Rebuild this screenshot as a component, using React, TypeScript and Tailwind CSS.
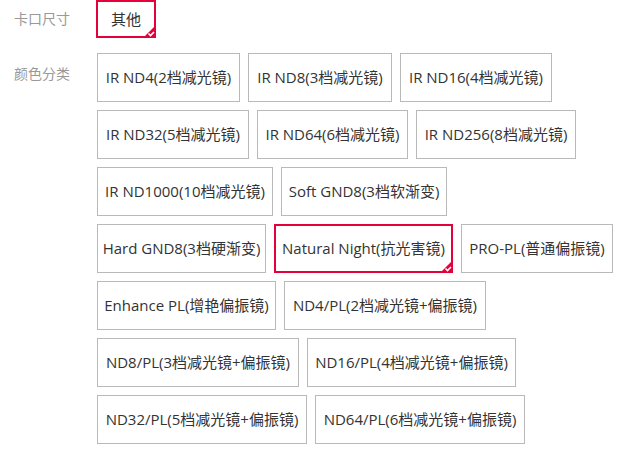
const colors: { label: string; w: string }[] = [
  { label: "IR ND4(2档减光镜)", w: "w-[143px]" },
  { label: "IR ND8(3档减光镜)", w: "w-[144px]" },
  { label: "IR ND16(4档减光镜)", w: "w-[152px]" },
  { label: "IR ND32(5档减光镜)", w: "w-[152px]" },
  { label: "IR ND64(6档减光镜)", w: "w-[151px]" },
  { label: "IR ND256(8档减光镜)", w: "w-[160px]" },
  { label: "IR ND1000(10档减光镜)", w: "w-[176px]" },
  { label: "Soft GND8(3档软渐变)", w: "w-[166px]" },
  { label: "Hard GND8(3档硬渐变)", w: "w-[169px]" },
  { label: "Natural Night(抗光害镜)", w: "w-[179px]" },
  { label: "PRO-PL(普通偏振镜)", w: "w-[152px]" },
  { label: "Enhance PL(增艳偏振镜)", w: "w-[179px]" },
  { label: "ND4/PL(2档减光镜+偏振镜)", w: "w-[202px]" },
  { label: "ND8/PL(3档减光镜+偏振镜)", w: "w-[202px]" },
  { label: "ND16/PL(4档减光镜+偏振镜)", w: "w-[209px]" },
  { label: "ND32/PL(5档减光镜+偏振镜)", w: "w-[210px]" },
  { label: "ND64/PL(6档减光镜+偏振镜)", w: "w-[210px]" },
];

const font = { fontFamily: '"Open Sans", "Noto Sans CJK SC", sans-serif' };

function Tick() {
  return (
    <svg className="absolute -bottom-[2px] -right-[2px]" width="13" height="13" viewBox="0 0 13 13">
      <polygon points="13,0 13,13 0,13" fill="#e4003a" />
      <path d="M5.5 8.5 L7.5 10.5 L11 7" stroke="#fff" strokeWidth="1.6" fill="none" />
    </svg>
  );
}

function Option({ label, selected, h, w }: { label: string; selected?: boolean; h: string; w: string }) {
  return (
    <div
      className={
        selected
          ? `relative flex items-center justify-center ${h} ${w} border-2 border-[#e4003a] text-[15px] text-[#333] bg-white`
          : `relative flex items-center justify-center ${h} ${w} border border-[#b9b9b9] text-[15px] text-[#333] bg-white`
      }
    >
      <span className="whitespace-nowrap">{label}</span>
      {selected && <Tick />}
    </div>
  );
}

export default function App() {
  return (
    <div className="w-[621px] h-[459px] bg-white overflow-hidden" style={font}>
      <div className="flex">
        <div className="w-[96px] pl-[14px] pt-[8px] text-[14px] text-[#999]">卡口尺寸</div>
        <Option label="其他" selected h="h-[38px]" w="w-[60px]" />
      </div>
      <div className="flex mt-[15px]">
        <div className="w-[97px] shrink-0 pl-[14px] pt-[10px] text-[14px] text-[#999]">颜色分类</div>
        <div className="flex flex-wrap gap-x-[8px] gap-y-[8px] flex-1">
          {colors.map((c) => (
            <Option key={c.label} label={c.label} w={c.w} selected={c.label.startsWith("Natural")} h="h-[49px]" />
          ))}
        </div>
      </div>
    </div>
  );
}
